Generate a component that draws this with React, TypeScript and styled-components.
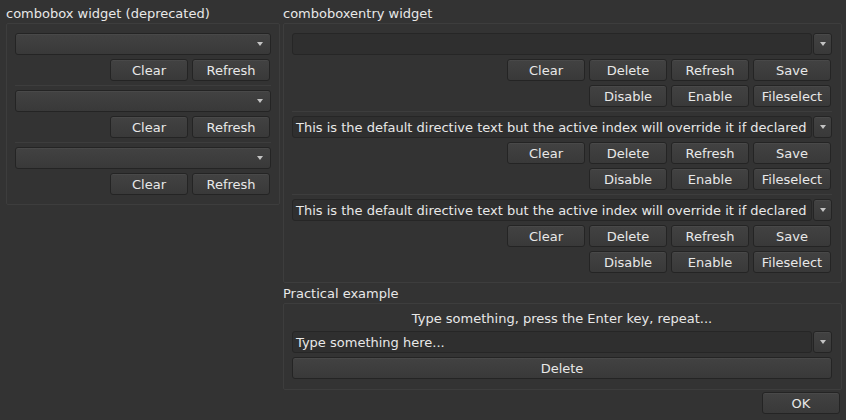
import React from 'react';
import styled, { createGlobalStyle } from 'styled-components';

const GlobalStyle = createGlobalStyle`
  html, body {
    margin: 0;
    background: #333333;
  }
  body {
    font-family: "DejaVu Sans", "Noto Sans", sans-serif;
    font-size: 13px;
    color: #e8e8e8;
  }
`;

const Window = styled.div`
  width: 846px;
  height: 420px;
  box-sizing: border-box;
  padding: 5px 4px 0 6px;
  display: flex;
  flex-direction: column;
`;

const Columns = styled.div`
  display: flex;
  gap: 3px;
  align-items: flex-start;
`;

const Column = styled.div<{ $width?: number }>`
  display: flex;
  flex-direction: column;
  ${(p) => (p.$width ? `width: ${p.$width}px; flex: none;` : 'flex: 1;')}
`;

const FrameLabel = styled.div<{ $spaced?: boolean }>`
  height: 17px;
  line-height: 17px;
  margin-top: ${(p) => (p.$spaced ? 2 : 0)}px;
  margin-bottom: 1px;
  white-space: nowrap;
`;

const Frame = styled.div<{ $pad: string }>`
  border: 1px solid #3d3d3d;
  border-radius: 2px;
  padding: ${(p) => p.$pad};
  display: flex;
  flex-direction: column;
`;

const Group = styled.div`
  display: flex;
  flex-direction: column;
  gap: 4px;
`;

const Separator = styled.div`
  height: 1px;
  margin: 4px 0;
  background: #3d3d3d;
`;

const ButtonRow = styled.div`
  display: flex;
  justify-content: flex-end;
  gap: 4px;
  padding-right: 1px;
`;

const buttonLook = `
  box-sizing: border-box;
  height: 22px;
  border: 1px solid #242424;
  border-radius: 3px;
  background: linear-gradient(#424242, #393939);
  box-shadow: inset 0 1px rgba(255, 255, 255, 0.04);
`;

const Button = styled.button<{ $wide?: boolean }>`
  ${buttonLook}
  width: ${(p) => (p.$wide ? '100%' : '78px')};
  padding: 1px 0 0;
  font: inherit;
  color: #e8e8e8;
  line-height: 19px;
  text-align: center;
  white-space: nowrap;
`;

const ComboBox = styled.div`
  ${buttonLook}
  display: flex;
  align-items: center;
  justify-content: flex-end;
  padding-right: 7px;
`;

const Arrow = styled.span`
  width: 0;
  height: 0;
  border-left: 3.5px solid transparent;
  border-right: 3.5px solid transparent;
  border-top: 4px solid #c4c4c4;
`;

const EntryCombo = styled.div`
  display: flex;
  height: 22px;
  gap: 1px;
`;

const Entry = styled.div`
  flex: 1;
  box-sizing: border-box;
  min-width: 0;
  height: 22px;
  background: #2f2f2f;
  border: 1px solid #262626;
  border-radius: 3px;
  padding: 1px 3px 0;
  line-height: 20px;
  white-space: nowrap;
  overflow: hidden;
`;

const ArrowButton = styled.div`
  ${buttonLook}
  width: 19px;
  display: flex;
  align-items: center;
  justify-content: center;
`;

const Hint = styled.div`
  line-height: 17px;
  text-align: center;
  margin-bottom: 4px;
`;

const Footer = styled.div`
  display: flex;
  justify-content: flex-end;
  margin-top: 2px;
  padding-right: 2px;
`;

const DIRECTIVE = 'This is the default directive text but the active index will override it if declared';

const entryGroups = ['', DIRECTIVE, DIRECTIVE];

const LegacyGroup: React.FC = () => (
  <Group>
    <ComboBox>
      <Arrow />
    </ComboBox>
    <ButtonRow>
      <Button>Clear</Button>
      <Button>Refresh</Button>
    </ButtonRow>
  </Group>
);

const EntryGroup: React.FC<{ text: string }> = ({ text }) => (
  <Group>
    <EntryCombo>
      <Entry>{text}</Entry>
      <ArrowButton>
        <Arrow />
      </ArrowButton>
    </EntryCombo>
    <ButtonRow>
      <Button>Clear</Button>
      <Button>Delete</Button>
      <Button>Refresh</Button>
      <Button>Save</Button>
    </ButtonRow>
    <ButtonRow>
      <Button>Disable</Button>
      <Button>Enable</Button>
      <Button>Fileselect</Button>
    </ButtonRow>
  </Group>
);

const App: React.FC = () => {
  return (
    <>
      <GlobalStyle />
      <Window>
        <Columns>
          <Column $width={274}>
            <FrameLabel>combobox widget (deprecated)</FrameLabel>
            <Frame $pad="9px 8px 9px 8px">
              {[0, 1, 2].map((i) => (
                <React.Fragment key={i}>
                  {i > 0 && <Separator />}
                  <LegacyGroup />
                </React.Fragment>
              ))}
            </Frame>
          </Column>
          <Column>
            <FrameLabel>comboboxentry widget</FrameLabel>
            <Frame $pad="9px 9px 9px 8px">
              {entryGroups.map((text, i) => (
                <React.Fragment key={i}>
                  {i > 0 && <Separator />}
                  <EntryGroup text={text} />
                </React.Fragment>
              ))}
            </Frame>
            <FrameLabel $spaced>Practical example</FrameLabel>
            <Frame $pad="6px 9px 10px 8px">
              <Hint>Type something, press the Enter key, repeat...</Hint>
              <Group>
                <EntryCombo>
                  <Entry>Type something here...</Entry>
                  <ArrowButton>
                    <Arrow />
                  </ArrowButton>
                </EntryCombo>
                <Button $wide>Delete</Button>
              </Group>
            </Frame>
          </Column>
        </Columns>
        <Footer>
          <Button>OK</Button>
        </Footer>
      </Window>
    </>
  );
};

export default App;
